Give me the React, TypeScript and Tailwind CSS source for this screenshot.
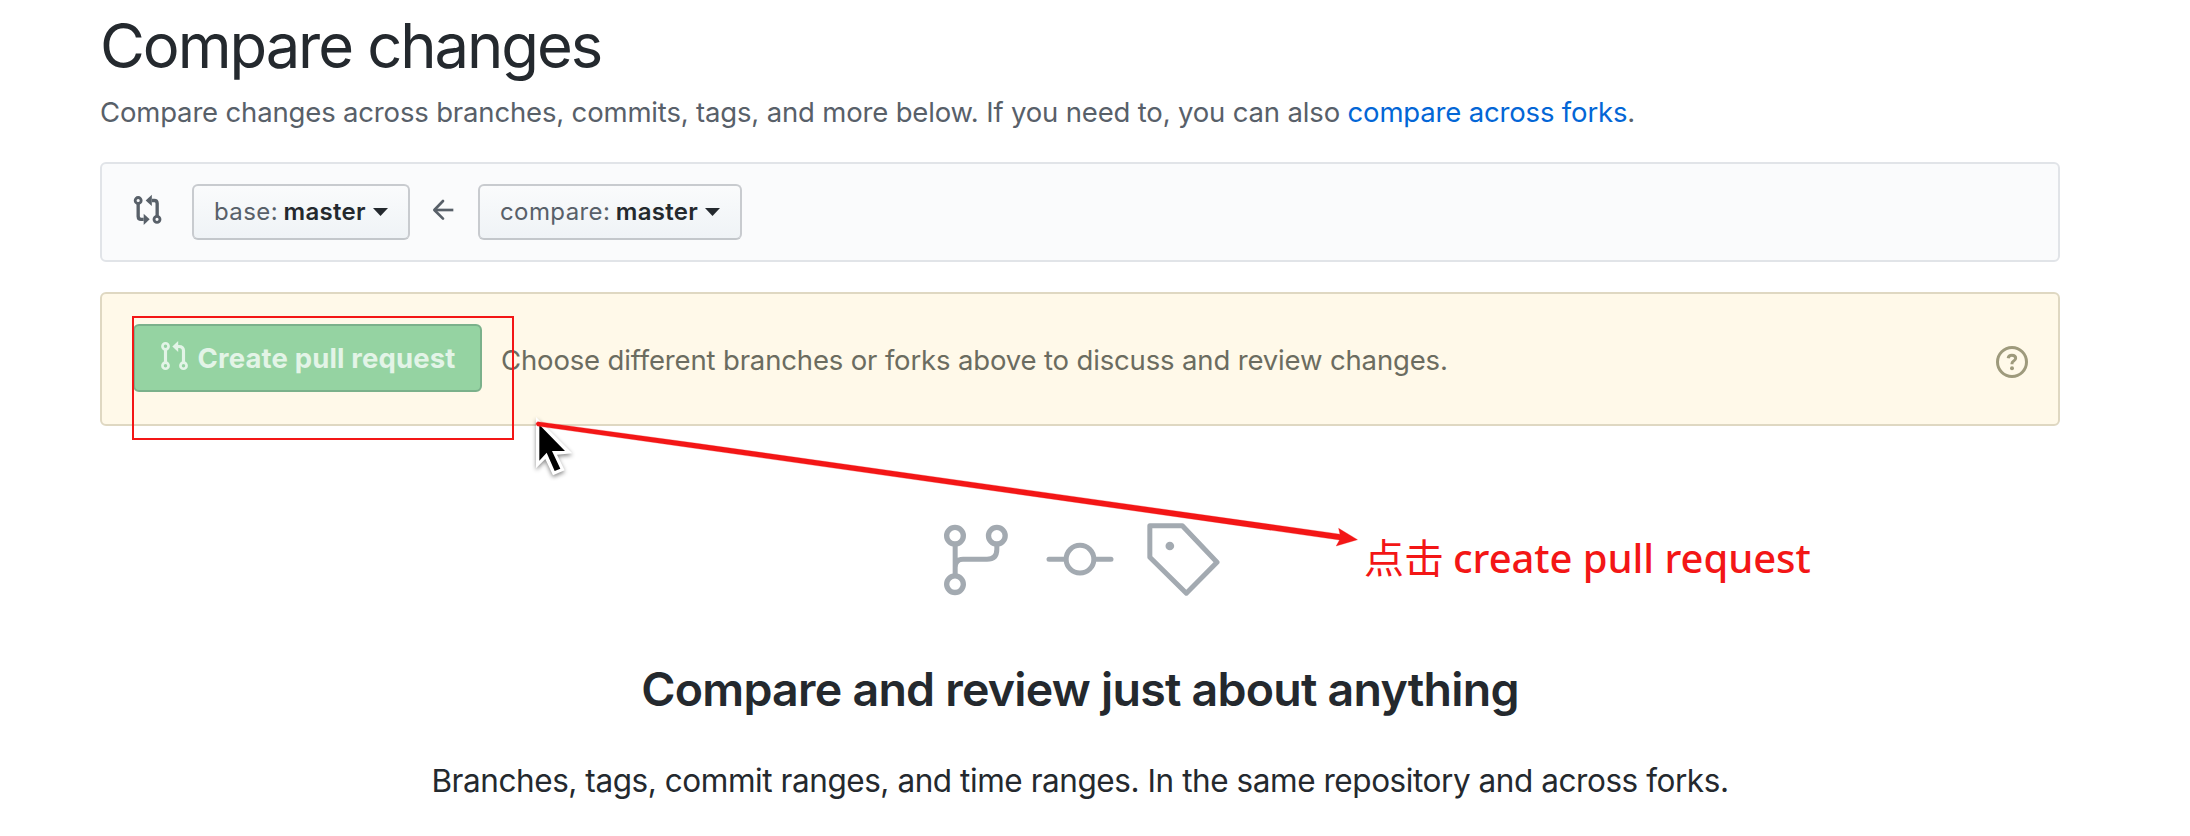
function CompareIcon() {
  return (
    <svg width="30" height="32" viewBox="160 132 90 96" fill="none" stroke="#586069" className="ml-[31px] mb-[4px] shrink-0">
      <circle cx="175.5" cy="151.5" r="9" strokeWidth="8.5" />
      <circle cx="232" cy="208" r="9" strokeWidth="8.5" />
      <path d="M175.5 161V199Q176 208 184 208H192" strokeWidth="10" />
      <path d="M232.500 199V160Q232 151.500 224 151.500H217" strokeWidth="10" />
      <path d="M192 191.500L210 208L192 225Z" fill="#586069" stroke="none" />
      <path d="M216.500 134.500V168L198 151.500Z" fill="#586069" stroke="none" />
    </svg>
  );
}

function PullRequestIcon() {
  return (
    <svg width="30" height="32" viewBox="210 180 90 96" fill="none" stroke="currentColor" className="mb-[5px] shrink-0">
      <circle cx="226.500" cy="199" r="9.200" strokeWidth="8" />
      <circle cx="226.500" cy="257" r="9.200" strokeWidth="8" />
      <circle cx="280.500" cy="257" r="9.200" strokeWidth="8" />
      <path d="M226.500 209V247" strokeWidth="9.500" />
      <path d="M280.500 247V212Q280 199.500 267 199.500H262" strokeWidth="9.500" />
      <path d="M264.500 183V216L247 199.500Z" fill="currentColor" stroke="none" />
    </svg>
  );
}

function Caret() {
  return (
    <svg width="15" height="8" viewBox="0 0 15 8" className="ml-[7px] shrink-0">
      <path d="M0 0H15L7.500 8Z" fill="#24292e" />
    </svg>
  );
}

function BranchButton({ label, branch, className }: { label: string; branch: string; className: string }) {
  return (
    <button
      type="button"
      className={`flex h-[56px] items-center rounded-[6px] border-2 border-[#c8cbcf] border-b-[#c3c7cb] bg-gradient-to-b from-[#fafbfc] to-[#eff3f6] pl-[20px] text-[24px] text-[#586069] ${className}`}
    >
      <span className="tracking-[0.4px]">{label}</span>
      <span className="ml-[5.500px] font-semibold tracking-[0.3px] text-[#24292e]">{branch}</span>
      <Caret />
    </button>
  );
}

export default function App() {
  return (
    <div className="relative h-[836px] w-[2190px] overflow-hidden bg-white font-['Inter',sans-serif] text-[#24292e]">
      <main className="ml-[100px] flex w-[1960px] flex-col">
        <h1 className="h-[91px] whitespace-nowrap text-[61.5px] leading-[91px] tracking-[-2.07px]">Compare changes</h1>
        <p className="whitespace-nowrap text-[27.5px] leading-[43px] tracking-[-0.165px] text-[#586069]">
          Compare changes across branches, commits, tags, and more below. If you need to, you can also{' '}
          <a className="text-[#0366d6]">compare across forks</a>.
        </p>

        <div className="mt-[28px] flex h-[100px] items-center rounded-[6px] border-2 border-[#e1e4e8] bg-[#fafbfc]">
          <CompareIcon />
          <BranchButton label="base:" branch="master" className="ml-[29px] w-[218px]" />
          <svg width="24" height="24" viewBox="32 143 72 72" fill="none" stroke="#586069" strokeWidth="8" strokeLinecap="round" strokeLinejoin="round" className="mb-[4px] ml-[21px] shrink-0">
            <path d="M68 152L42 179L68 205" />
            <path d="M43 179H99" strokeLinecap="butt" />
          </svg>
          <BranchButton label="compare:" branch="master" className="ml-[23px] w-[264px]" />
        </div>

        <div className="mt-[30px] flex h-[134px] items-start rounded-[6px] border-2 border-[#dfd8c2] bg-[#fff9e9] pl-[31px] pt-[30px]">
          <button type="button" className="flex h-[68px] w-[349px] items-center rounded-[6px] border-2 border-[#7bb18b] bg-[#95d3a2] pl-[25px] text-[#e3f4e7]">
            <PullRequestIcon />
            <span className="ml-[7.500px] mt-px whitespace-nowrap text-[27.5px] font-bold tracking-[0.14px]">Create pull request</span>
          </button>
          <p className="ml-[19px] whitespace-nowrap text-[27.5px] leading-[73px] tracking-[-0.15px] text-[#6b6c60]">
            Choose different branches or forks above to discuss and review changes.
          </p>
          <svg width="34" height="34" viewBox="165 225 102 102" fill="none" stroke="#9e9a7c" className="ml-auto mr-[29px] mt-[21px] shrink-0">
            <circle cx="216" cy="276" r="43.500" strokeWidth="9" />
            <path d="M204.500 264.500Q206 256 215.500 256Q227 256 227 265Q227 269.500 221 273Q216 276 216 280V283" strokeWidth="9" />
            <circle cx="216" cy="294.500" r="6" fill="#9e9a7c" stroke="none" />
          </svg>
        </div>

        <section className="flex flex-col items-center pt-[96px]">
          <svg width="280" height="76" viewBox="60 66 840 228" fill="none" stroke="#a3aab1" strokeWidth="15">
            <g strokeWidth="16">
              <circle cx="105" cy="107" r="25" />
              <circle cx="230.500" cy="107" r="25" />
              <circle cx="105" cy="252.500" r="25" />
            </g>
            <path d="M105.500 133V226M105.500 203Q105.500 178 129 178H201Q230.500 178 230.500 148V133" />
            <circle cx="480" cy="177.500" r="41.500" />
            <path d="M387 177.500H433M527 177.500H573" strokeLinecap="round" />
            <path d="M689.500 77H787L891 186.500L799 279.500L689.500 172Z" strokeLinejoin="round" />
            <circle cx="749.500" cy="138" r="13" fill="#a3aab1" stroke="none" />
          </svg>
          <h2 className="mt-[58px] whitespace-nowrap text-[46.5px] font-semibold leading-[66px] tracking-[-0.76px]">
            Compare and review just about anything
          </h2>
          <p className="mt-[37px] whitespace-nowrap text-[31.5px] leading-[43px] tracking-[-0.44px]">
            Branches, tags, commit ranges, and time ranges. In the same repository and across forks.
          </p>
        </section>
      </main>

      <svg width="50" height="70" viewBox="1320 400 150 210" className="absolute left-[530px] top-[413px] drop-shadow-[0_2px_2px_rgba(0,0,0,0.45)]">
        <path d="M1338 412L1447 521L1401 525L1424 572L1389 587L1366 538L1338 566Z" fill="white" />
        <path d="M1348 435L1425 514H1386L1411 567L1394 574L1370 519L1348 543Z" fill="black" />
      </svg>
      <div className="absolute left-[132px] top-[316px] h-[124px] w-[382px] border-2 border-[#f31616]" />
      <svg width="2190" height="836" viewBox="0 0 2190 836" className="pointer-events-none absolute left-0 top-0">
        <path d="M537.800 421.700L700 443.800L1340 534.200L1338.600 528.300L1357.500 539.700L1336.200 546L1339.500 540L700 449L537.300 426Q534.500 423.500 537.800 421.700Z" fill="#f31616" stroke="#f31616" strokeWidth="0.3" />
      </svg>
      <p className="absolute left-[1364px] top-[530px] flex whitespace-nowrap font-['Noto_Sans','Noto_Sans_CJK_SC',sans-serif] text-[40px] leading-[56px] text-[#f31616]">
        <span>点击</span>
        <span className="ml-[9px] font-medium tracking-[-0.06px]">create pull request</span>
      </p>
    </div>
  );
}
